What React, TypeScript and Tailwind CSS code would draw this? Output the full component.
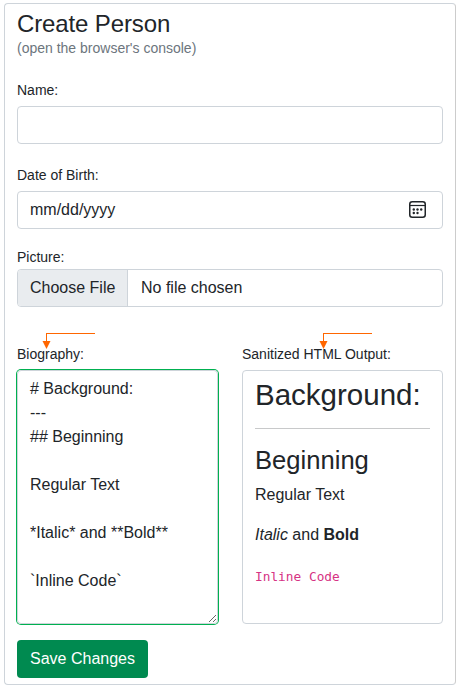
import React from "react";

const biography = `# Background:
---
## Beginning

Regular Text

*Italic* and **Bold**

\`Inline Code\``;

function Label({ children }: { children: React.ReactNode }) {
  return <div className="h-5 text-[14px] leading-5">{children}</div>;
}

function Pointer() {
  return (
    <svg
      className="pointer-events-none absolute -top-3 left-0 h-6 w-[90px]"
      viewBox="0 0 90 24"
      fill="none"
      shapeRendering="crispEdges"
    >
      <path d="M29 1.5H78M29.5 1V10" stroke="#ff6600" />
      <path d="M25.5 9H33.5L29.5 17Z" fill="#ff6600" shapeRendering="auto" />
    </svg>
  );
}

function CalendarIcon() {
  return (
    <svg className="h-[18px] w-[18px]" viewBox="0 0 18 18" fill="none">
      <rect x="0.75" y="0.75" width="15.5" height="15.5" rx="2.5" stroke="#212529" strokeWidth="1.5" />
      <path d="M1 4.5H16" stroke="#212529" strokeWidth="1.2" />
      <g fill="#212529">
        <circle cx="4.8" cy="8.5" r="1.2" />
        <circle cx="8.5" cy="8.5" r="1.2" />
        <circle cx="12.2" cy="8.5" r="1.2" />
        <circle cx="4.8" cy="12" r="1.2" />
        <circle cx="8.5" cy="12" r="1.2" />
      </g>
    </svg>
  );
}

export default function App() {
  return (
    <div className="h-[689px] w-[460px] bg-white pt-[3px] pl-1 font-['Liberation_Sans',Arial,sans-serif] text-[#212529]">
      <main className="h-[682px] w-[452px] rounded border border-[#ced4da] border-r-[#cccccc] px-3 pt-1.5">
        <h1 className="text-[24px] leading-7 tracking-[-0.12px]">Create Person</h1>
        <p className="text-[14px] leading-5 text-[#6c757d]">(open the browser's console)</p>

        <div className="mt-[22px] flex flex-col gap-1.5">
          <Label>Name:</Label>
          <input
            aria-label="Name"
            className="h-[38px] w-full rounded border border-[#ced4da] px-3 text-base outline-none"
          />
        </div>

        <div className="mt-[21px] flex flex-col gap-1.5">
          <Label>Date of Birth:</Label>
          <div className="flex h-[38px] items-center justify-between rounded border border-[#ced4da] pr-[15px] pl-3">
            <span>mm/dd/yyyy</span>
            <CalendarIcon />
          </div>
        </div>

        <div className="mt-[18px] flex flex-col gap-0.5">
          <Label>Picture:</Label>
          <div className="flex h-[38px] overflow-hidden rounded border border-[#ced4da] leading-9">
            <span className="w-[110px] shrink-0 border-r border-[#ced4da] bg-[#e9ecef] pl-3 whitespace-nowrap">
              Choose File
            </span>
            <span className="pl-[13px]">No file chosen</span>
          </div>
        </div>

        <div className="mt-[37px] flex gap-6">
          <section className="relative flex w-[201px] flex-col gap-1.5">
            <Pointer />
            <Label>Biography:</Label>
            <textarea
              aria-label="Biography"
              readOnly
              value={biography}
              className="block h-[254px] w-[201px] resize overflow-hidden rounded border border-[#ced4da] px-3 py-1.5 text-base leading-6 ring-1 ring-[#00b050] outline-none"
            />
          </section>
          <section className="relative flex w-[201px] flex-col gap-1.5">
            <div className="absolute top-0 left-[52px]">
              <Pointer />
            </div>
            <Label>Sanitized HTML Output:</Label>
            <div className="h-[254px] rounded border border-[#ced4da] px-3 pt-1.5">
              <h1 className="text-[29.5px] leading-9">Background:</h1>
              <hr className="mt-[15px] border-[#c8c9ca]" />
              <h2 className="mt-4 text-[25.6px] leading-[31px]">Beginning</h2>
              <p className="mt-[7px] leading-6">Regular Text</p>
              <p className="mt-4 leading-6">
                <em>Italic</em> and <strong>Bold</strong>
              </p>
              <p className="mt-[17px] leading-6">
                <code className="font-['DejaVu_Sans_Mono',monospace] text-[12.8px] text-[#d63384]">
                  Inline Code
                </code>
              </p>
            </div>
          </section>
        </div>

        <button className="mt-4 block h-[38px] w-[131px] rounded bg-[#008a50] text-base leading-[38px] text-white">
          Save Changes
        </button>
      </main>
    </div>
  );
}
